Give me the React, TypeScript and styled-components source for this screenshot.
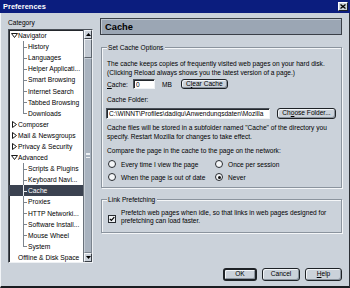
import React from "react";
import styled, { createGlobalStyle } from "styled-components";

const GlobalStyle = createGlobalStyle`
  html, body {
    margin: 0;
    padding: 0;
    background: #cbd2da;
  }
  body {
    font-family: "Liberation Sans", Arial, sans-serif;
    font-size: 6.6px;
    color: #000;
  }
  * {
    box-sizing: border-box;
  }
`;

type TreeItem = {
  label: string;
  level: 0 | 1;
  twisty?: "open" | "closed";
  last?: boolean;
  selected?: boolean;
};

const treeItems: TreeItem[] = [
  { label: "Navigator", level: 0, twisty: "open" },
  { label: "History", level: 1 },
  { label: "Languages", level: 1 },
  { label: "Helper Applicati...", level: 1 },
  { label: "Smart Browsing", level: 1 },
  { label: "Internet Search", level: 1 },
  { label: "Tabbed Browsing", level: 1 },
  { label: "Downloads", level: 1, last: true },
  { label: "Composer", level: 0, twisty: "closed" },
  { label: "Mail & Newsgroups", level: 0, twisty: "closed" },
  { label: "Privacy & Security", level: 0, twisty: "closed" },
  { label: "Advanced", level: 0, twisty: "open" },
  { label: "Scripts & Plugins", level: 1 },
  { label: "Keyboard Navi...", level: 1 },
  { label: "Cache", level: 1, selected: true },
  { label: "Proxies", level: 1 },
  { label: "HTTP Networki...", level: 1 },
  { label: "Software Install...", level: 1 },
  { label: "Mouse Wheel", level: 1 },
  { label: "System", level: 1, last: true },
  { label: "Offline & Disk Space", level: 0 },
];

const Twisty = ({ kind }: { kind?: "open" | "closed" }) => {
  if (kind === "open") {
    return (
      <svg width="7" height="5" viewBox="0 0 7 5">
        <polygon points="0.5,0.5 6.5,0.5 3.5,4.5" fill="none" stroke="#1a1a1a" strokeWidth="1" />
      </svg>
    );
  }
  if (kind === "closed") {
    return (
      <svg width="5" height="7" viewBox="0 0 5 7" style={{ marginLeft: 1 }}>
        <polygon points="0.5,0.5 4.5,3.5 0.5,6.5" fill="none" stroke="#1a1a1a" strokeWidth="1" />
      </svg>
    );
  }
  return null;
};

const App = () => {
  return (
    <>
      <GlobalStyle />
      <Window>
        <TitleBar>
          <Title>Preferences</Title>
          <CloseButton aria-label="Close">
            <svg width="6" height="5" viewBox="0 0 6 5">
              <path d="M0.5 0.5L5.5 4.5M5.5 0.5L0.5 4.5" stroke="#000" strokeWidth="1.3" />
            </svg>
          </CloseButton>
        </TitleBar>

        <Frame>
          <Main>
            <Sidebar>
              <CategoryLabel>Category</CategoryLabel>
              <TreeBox>
                <TreeList>
                  {treeItems.map((item) => (
                    <TreeRow
                      key={item.label}
                      $level={item.level}
                      $last={item.last}
                      $selected={item.selected}
                    >
                      {item.level === 0 && (
                        <TwistySlot>
                          <Twisty kind={item.twisty} />
                        </TwistySlot>
                      )}
                      {item.label}
                    </TreeRow>
                  ))}
                </TreeList>
                <Scrollbar>
                  <ScrollButton>
                    <svg width="5" height="3" viewBox="0 0 5 3">
                      <polygon points="2.5,0 5,3 0,3" fill="#000" />
                    </svg>
                  </ScrollButton>
                  <ScrollCap />
                  <ScrollThumb>
                    <Grip />
                  </ScrollThumb>
                  <ScrollButton>
                    <svg width="5" height="3" viewBox="0 0 5 3">
                      <polygon points="0,0 5,0 2.5,3" fill="#000" />
                    </svg>
                  </ScrollButton>
                </Scrollbar>
              </TreeBox>
            </Sidebar>

            <Content>
              <Header>Cache</Header>

              <Group>
                <Legend>Set Cache Options</Legend>
                <Paragraph $top={8}>
                  The cache keeps copies of frequently visited web pages on your hard disk.
                  <br />
                  (Clicking Reload always shows you the latest version of a page.)
                </Paragraph>
                <CacheRow>
                  <FieldLabel>
                    <u>C</u>ache:
                  </FieldLabel>
                  <TextField $width={22} $height={10} defaultValue="0" readOnly />
                  <Unit>MB</Unit>
                  <Button $width={47} $height={10} $strong>
                    C<u>l</u>ear Cache
                  </Button>
                </CacheRow>
                <Paragraph $top={7}>Cache Folder:</Paragraph>
                <PathRow>
                  <TextField
                    $width={164}
                    $height={11}
                    defaultValue="C:\WINNT\Profiles\dadigu\Anwendungsdaten\Mozilla"
                    readOnly
                  />
                  <Button $width={59} $height={11}>
                    Ch<u>o</u>ose Folder...
                  </Button>
                </PathRow>
                <Paragraph $top={3.5} $lineHeight={9}>
                  Cache files will be stored in a subfolder named "Cache" of the directory you
                  <br />
                  specify. Restart Mozilla for changes to take effect.
                </Paragraph>
                <Paragraph $top={5} $lineHeight={9}>
                  Compare the page in the cache to the page on the network:
                </Paragraph>
                <RadioGrid>
                  <RadioOption>
                    <RadioCircle />
                    Every time I view the page
                  </RadioOption>
                  <RadioOption>
                    <RadioCircle />
                    Once per session
                  </RadioOption>
                  <RadioOption>
                    <RadioCircle />
                    When the page is out of date
                  </RadioOption>
                  <RadioOption>
                    <RadioCircle $checked />
                    Never
                  </RadioOption>
                </RadioGrid>
              </Group>

              <Group $top={6.5} $bottom={6.25}>
                <Legend>Link Prefetching</Legend>
                <CheckRow>
                  <CheckBox>
                    <svg width="6" height="6" viewBox="0 0 6 6">
                      <path d="M0.8 2.8L2.4 4.4L5.3 1.2" fill="none" stroke="#000" strokeWidth="1.2" />
                    </svg>
                  </CheckBox>
                  <Paragraph $top={0}>
                    Prefetch web pages when idle, so that links in web pages designed for
                    <br />
                    prefetching can load faster.
                  </Paragraph>
                </CheckRow>
              </Group>
            </Content>
          </Main>

          <Footer>
            <Button $width={34} $height={13} $default>
              OK
            </Button>
            <Button $width={38} $height={13}>
              Cancel
            </Button>
            <Button $width={37} $height={13}>
              <u>H</u>elp
            </Button>
          </Footer>
        </Frame>
      </Window>
    </>
  );
};

const Window = styled.div`
  width: 350px;
  height: 288px;
  display: flex;
  flex-direction: column;
  background: #cbd2da;
  overflow: hidden;
`;

const TitleBar = styled.div`
  flex: none;
  height: 13px;
  display: flex;
  align-items: center;
  justify-content: space-between;
  padding: 0 2px 0 3px;
  background: #0b1d7e;
`;

const Title = styled.span`
  color: #fff;
  font-weight: bold;
  font-size: 7.4px;
  letter-spacing: 0.05px;
`;

const CloseButton = styled.button`
  width: 10px;
  height: 9px;
  padding: 0;
  display: flex;
  align-items: center;
  justify-content: center;
  background: #cbd2da;
  border: 1px solid;
  border-color: #fff #1e2226 #1e2226 #fff;
`;

const Frame = styled.div`
  flex: 1;
  display: flex;
  flex-direction: column;
  border-left: 1px solid #f2f5f8;
  border-right: 1px solid #2c3036;
  border-bottom: 2px solid #1a1d21;
`;

const Main = styled.div`
  display: flex;
  gap: 7px;
  padding: 5px 7px 0 7px;
`;

const Sidebar = styled.div`
  flex: none;
  width: 85px;
  display: flex;
  flex-direction: column;
`;

const CategoryLabel = styled.div`
  line-height: 9px;
  margin-bottom: 2px;
`;

const TreeBox = styled.div`
  height: 234px;
  display: flex;
  background: #fff;
  border: 1px solid;
  border-color: #4a5058 #eef1f4 #eef1f4 #4a5058;
  box-shadow: inset 1px 1px 0 #23272c;
`;

const TreeList = styled.div`
  flex: 1;
  min-width: 0;
  overflow: hidden;
`;

const TreeRow = styled.div<{ $level: 0 | 1; $last?: boolean; $selected?: boolean }>`
  position: relative;
  height: 11.1px;
  display: flex;
  align-items: center;
  padding-left: ${(p) => (p.$level === 1 ? 19 : 0)}px;
  font-size: 6.7px;
  white-space: nowrap;
  overflow: hidden;
  background: ${(p) => (p.$selected ? "#3b4250" : "transparent")};
  color: ${(p) => (p.$selected ? "#fff" : "#000")};

  ${(p) =>
    p.$level === 1 &&
    `
    &::before {
      content: "";
      position: absolute;
      left: 14px;
      top: 0;
      width: 1px;
      height: ${p.$last ? "50%" : "100%"};
      background: ${p.$selected ? "#e8ecf0" : "#7d858e"};
    }
    &::after {
      content: "";
      position: absolute;
      left: 14px;
      top: 50%;
      width: 4px;
      height: 1px;
      background: ${p.$selected ? "#e8ecf0" : "#7d858e"};
    }
  `}
`;

const TwistySlot = styled.span`
  flex: none;
  width: 9px;
  display: flex;
  align-items: center;
  padding-left: 2px;
`;

const Scrollbar = styled.div`
  flex: none;
  width: 9px;
  display: flex;
  flex-direction: column;
  background: #aab4c0;
  border-left: 1px solid #6a727b;
`;

const ScrollButton = styled.div`
  flex: none;
  height: 9px;
  display: flex;
  align-items: center;
  justify-content: center;
  background: #cbd2da;
  border: 1px solid;
  border-color: #f4f6f8 #3a3f46 #3a3f46 #f4f6f8;
`;

const ScrollCap = styled.div`
  flex: none;
  height: 19px;
  background: #c3cad3;
  border: 1px solid;
  border-color: #eef1f4 #5c646d #5c646d #eef1f4;
`;

const ScrollThumb = styled.div`
  flex: 1;
  display: flex;
  align-items: center;
  justify-content: center;
  background: #a9b3bf;
  border: 1px solid;
  border-color: #c8cfd7 #7a838d #7a838d #c8cfd7;
`;

const Grip = styled.div`
  width: 4px;
  height: 5px;
  border-top: 1px solid #eef1f4;
  border-bottom: 1px solid #eef1f4;
  box-shadow: inset 0 2px 0 -1px #eef1f4;
`;

const Content = styled.div`
  flex: 1;
  min-width: 0;
  display: flex;
  flex-direction: column;
`;

const Header = styled.div`
  height: 17px;
  display: flex;
  align-items: center;
  padding-left: 4px;
  background: #9ba6b4;
  border: 1px solid #3a3f47;
  box-shadow: inset 1px 1px 0 #c2cad4;
  font-size: 9.3px;
  font-weight: bold;
`;

const Group = styled.fieldset<{ $top?: number; $bottom?: number }>`
  margin: ${(p) => p.$top ?? 8}px 0 0 1px;
  padding: 0 5px ${(p) => p.$bottom ?? 5}px 5px;
  min-inline-size: 0;
  border: 1px solid #8b949e;
  box-shadow: inset 1px 1px 0 #f4f6f8, 1px 1px 0 #f4f6f8;
`;

const Legend = styled.legend`
  padding: 0 2px 0 1px;
  line-height: 9px;
  background: #cbd2da;
`;

const Paragraph = styled.p<{ $top: number; $lineHeight?: number }>`
  margin: ${(p) => p.$top}px 0 0 0;
  line-height: ${(p) => p.$lineHeight ?? 8.5}px;
  white-space: nowrap;
`;

const CacheRow = styled.div`
  display: flex;
  align-items: center;
  margin-top: 2px;
  height: 10px;
`;

const FieldLabel = styled.span`
  width: 26px;
`;

const Unit = styled.span`
  margin: 0 9px 0 7px;
`;

const PathRow = styled.div`
  display: flex;
  align-items: center;
  gap: 7px;
  margin: 3.5px 0 0 -1px;
`;

const TextField = styled.input<{ $width: number; $height: number }>`
  flex: none;
  width: ${(p) => p.$width}px;
  height: ${(p) => p.$height}px;
  margin: 0;
  padding: 0 2px;
  font-family: inherit;
  font-size: 6.6px;
  color: #000;
  background: #fff;
  border: 1px solid;
  border-color: #4a5058 #f0f3f6 #f0f3f6 #4a5058;
  box-shadow: inset 1px 1px 0 #23272c;
  outline: none;
`;

const Button = styled.button<{ $width: number; $height: number; $default?: boolean; $strong?: boolean }>`
  flex: none;
  width: ${(p) => p.$width}px;
  height: ${(p) => p.$height}px;
  margin: 0;
  padding: 0;
  font-family: inherit;
  font-size: 6.6px;
  line-height: 1;
  color: #000;
  background: #cbd2da;
  border: ${(p) => (p.$default ? 2 : p.$strong ? 1.5 : 1)}px solid #1e2226;
  border-radius: 3px;
  box-shadow: inset 1px 1px 0 #f2f5f8, inset -1px -1px 0 #8a939d;
`;

const RadioGrid = styled.div`
  display: grid;
  grid-template-columns: 107px auto;
  grid-auto-rows: 10px;
  row-gap: 3px;
  margin: 4.5px 0 0 1px;
`;

const RadioOption = styled.label`
  display: flex;
  align-items: center;
  gap: 5px;
  white-space: nowrap;
`;

const RadioCircle = styled.span<{ $checked?: boolean }>`
  flex: none;
  width: 8px;
  height: 8px;
  border-radius: 50%;
  display: flex;
  align-items: center;
  justify-content: center;
  background: #f4f6f8;
  border: 1px solid #262a2f;

  &::after {
    content: "";
    width: 3px;
    height: 3px;
    border-radius: 50%;
    background: ${(p) => (p.$checked ? "#111" : "transparent")};
  }
`;

const CheckRow = styled.div`
  display: flex;
  align-items: flex-start;
  gap: 5px;
  margin: 5.25px 0 0 1px;
`;

const CheckBox = styled.span`
  flex: none;
  width: 8px;
  height: 8px;
  margin-top: 6px;
  display: flex;
  align-items: center;
  justify-content: center;
  background: #eef1f4;
  border: 1px solid #262a2f;
`;

const Footer = styled.div`
  display: flex;
  justify-content: flex-end;
  gap: 5px;
  padding: 5px 7px 0 0;
`;

export default App;
